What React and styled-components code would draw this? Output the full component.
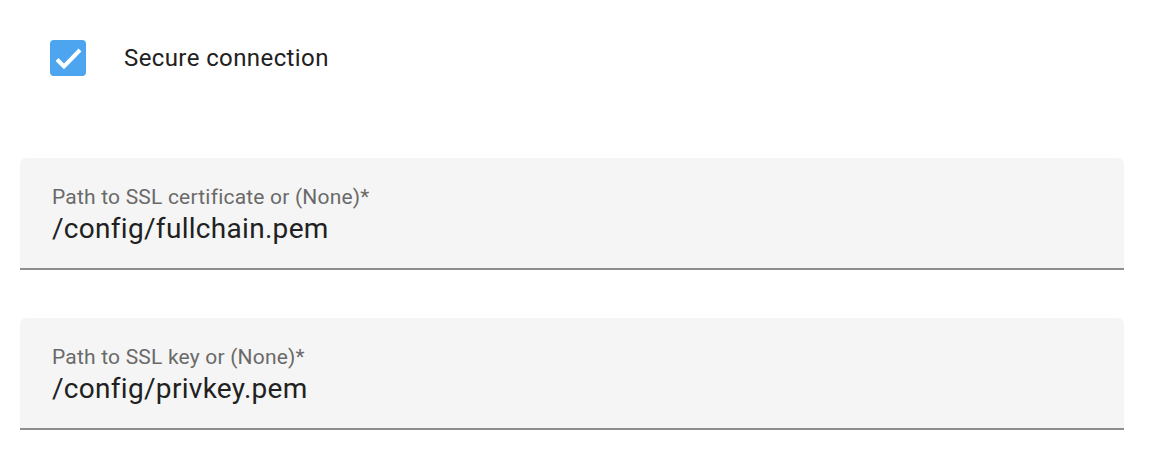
import React from "react";
import styled, { createGlobalStyle } from "styled-components";

const GlobalStyle = createGlobalStyle`
  body {
    margin: 0;
    background: #ffffff;
    font-family: Roboto, "Noto Sans", sans-serif;
  }
`;

const Page = styled.div`
  width: 1152px;
  height: 452px;
  box-sizing: border-box;
  padding: 40px 28px 0 20px;
  display: flex;
  flex-direction: column;
`;

const CheckRow = styled.label`
  display: flex;
  align-items: center;
  gap: 38px;
  padding-left: 30px;
  height: 36px;
  margin-bottom: 82px;
`;

const Box = styled.span`
  width: 36px;
  height: 36px;
  border-radius: 4px;
  background: ${(p) => (p.checked ? "#4ca5ee" : "transparent")};
  display: flex;
  align-items: center;
  justify-content: center;
  flex-shrink: 0;
`;

const CheckLabel = styled.span`
  font-size: 24px;
  color: #212121;
  letter-spacing: 0.4px;
`;

const Fields = styled.div`
  display: flex;
  flex-direction: column;
  gap: 48px;
`;

const Field = styled.div`
  box-sizing: border-box;
  height: 112px;
  background: #f5f5f5;
  border-radius: 6px 6px 0 0;
  border-bottom: 2px solid #8e8e8e;
  padding: 27px 32px 0;
  display: flex;
  flex-direction: column;
`;

const Label = styled.span`
  font-size: 21px;
  line-height: 24px;
  letter-spacing: 0.2px;
  color: #6a6a6a;
`;

const Value = styled.span`
  font-size: 28px;
  line-height: 32px;
  letter-spacing: 0.3px;
  color: #212121;
  margin-top: 4px;
`;

const Checkbox = ({ checked, label }) => (
  <CheckRow>
    <Box checked={checked}>
      {checked && (
        <svg width="36" height="36" viewBox="0 0 36 36">
          <path
            d="M7 19.5 L14 26.5 L30 10"
            fill="none"
            stroke="#ffffff"
            strokeWidth="4"
          />
        </svg>
      )}
    </Box>
    <CheckLabel>{label}</CheckLabel>
  </CheckRow>
);

const TextField = ({ label, value }) => (
  <Field>
    <Label>{label}</Label>
    <Value>{value}</Value>
  </Field>
);

export default function App() {
  return (
    <>
      <GlobalStyle />
      <Page>
        <Checkbox checked label="Secure connection" />
        <Fields>
          <TextField
            label="Path to SSL certificate or (None)*"
            value="/config/fullchain.pem"
          />
          <TextField
            label="Path to SSL key or (None)*"
            value="/config/privkey.pem"
          />
        </Fields>
      </Page>
    </>
  );
}
